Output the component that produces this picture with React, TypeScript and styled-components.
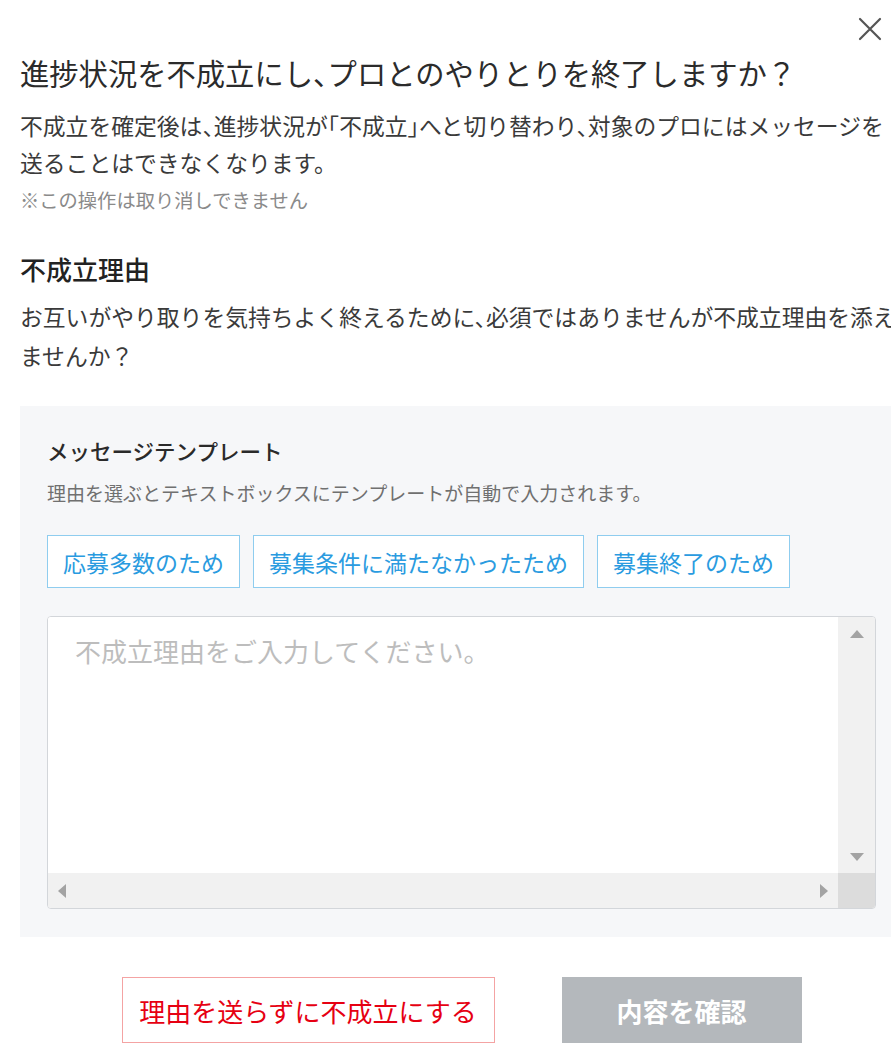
import React from 'react';
import styled, { createGlobalStyle } from 'styled-components';

const GlobalStyle = createGlobalStyle`
  html, body {
    margin: 0;
    padding: 0;
    background: #fff;
    overflow: hidden;
  }
  body {
    font-family: "Noto Sans CJK JP", "Noto Sans", sans-serif;
    color: #333;
  }
`;

const Modal = styled.div`
  position: relative;
  width: 883px;
  padding: 52px 20px 40px 20px;
  font-feature-settings: "halt";
`;

const CloseButton = styled.button`
  position: absolute;
  top: 16px;
  left: 857px;
  width: 26px;
  height: 26px;
  padding: 0;
  border: none;
  background: none;
  cursor: pointer;
  display: flex;
  align-items: center;
  justify-content: center;
`;

const Title = styled.h1`
  margin: 0;
  font-size: 29.3px;
  line-height: 40px;
  font-weight: 400;
  color: #2b2b2b;
  white-space: nowrap;
`;

const Lead = styled.p<{ $top: number; $lh: number }>`
  margin: ${(p) => p.$top}px 0 0;
  font-size: 22.8px;
  line-height: ${(p) => p.$lh}px;
  color: #3a3a3a;
`;

const Note = styled.p`
  margin: 6px 0 0;
  font-size: 19.3px;
  line-height: 26px;
  color: #8a8a8a;
`;

const SectionTitle = styled.h2`
  margin: 38px 0 0;
  font-size: 26px;
  line-height: 36px;
  font-weight: 500;
  color: #222;
`;

const Panel = styled.section`
  margin-top: 31px;
  background: #f6f7f9;
  padding: 30px 27px 28px;
`;

const PanelTitle = styled.h3`
  margin: 0;
  font-size: 21.5px;
  line-height: 30px;
  font-weight: 500;
  color: #2a2a2a;
`;

const PanelHint = styled.p`
  margin: 14px 0 0;
  font-size: 19px;
  line-height: 26px;
  color: #707070;
`;

const ChipRow = styled.div`
  display: flex;
  gap: 13px;
  margin-top: 29px;
`;

const Chip = styled.button`
  height: 53px;
  padding: 0 15px;
  background: #fff;
  border: 1px solid #8fcdef;
  border-radius: 0;
  font-family: inherit;
  font-feature-settings: inherit;
  font-size: 23px;
  color: #2a9be0;
  cursor: pointer;
`;

const InputBox = styled.div`
  margin-top: 28px;
  height: 291px;
  border: 1px solid #d3d6da;
  border-radius: 4px;
  background: #fff;
  overflow: hidden;
  display: grid;
  grid-template-columns: 1fr 37px;
  grid-template-rows: 1fr 35px;
`;

const Reason = styled.textarea`
  border: none;
  outline: none;
  resize: none;
  padding: 16px 27px;
  font-family: inherit;
  font-size: 26px;
  line-height: 36px;
  color: #333;
  background: #fff;
  &::placeholder {
    color: #bdbdbd;
  }
`;

const VTrack = styled.div`
  background: #f1f1f1;
  display: flex;
  flex-direction: column;
  justify-content: space-between;
  align-items: center;
  padding: 13px 0 12px;
`;

const HTrack = styled.div`
  background: #f1f1f1;
  display: flex;
  justify-content: space-between;
  align-items: center;
  padding: 0 10px 0 10px;
`;

const Corner = styled.div`
  background: #dcdcdc;
`;

const Actions = styled.div`
  display: flex;
  justify-content: center;
  gap: 67px;
  margin-top: 40px;
`;

const ActionButton = styled.button<{ $variant: 'danger' | 'muted' }>`
  height: 66px;
  padding: 0 15px;
  font-family: inherit;
  font-size: 26px;
  cursor: pointer;
  border: 1px solid ${(p) => (p.$variant === 'danger' ? '#f4a3a3' : '#b4b8bc')};
  background: ${(p) => (p.$variant === 'danger' ? '#fff' : '#b4b8bc')};
  color: ${(p) => (p.$variant === 'danger' ? '#e60012' : '#fff')};
  font-weight: ${(p) => (p.$variant === 'danger' ? 400 : 700)};
  min-width: ${(p) => (p.$variant === 'danger' ? 373 : 240)}px;
`;

const Arrow = ({ dir }: { dir: 'up' | 'down' | 'left' | 'right' }) => {
  const shapes = {
    up: '0,8 7,0 14,8',
    down: '0,0 14,0 7,8',
    left: '8,0 8,14 0,7',
    right: '0,0 8,7 0,14',
  };
  const vertical = dir === 'up' || dir === 'down';
  return (
    <svg width={vertical ? 14 : 8} height={vertical ? 8 : 14} viewBox={vertical ? '0 0 14 8' : '0 0 8 14'}>
      <polygon points={shapes[dir]} fill="#a3a3a3" />
    </svg>
  );
};

const templates = ['応募多数のため', '募集条件に満たなかったため', '募集終了のため'];

export default function App() {
  return (
    <>
      <GlobalStyle />
      <Modal>
        <CloseButton aria-label="閉じる">
          <svg width="24" height="24" viewBox="0 0 24 24">
            <path d="M2 2 L22 22 M22 2 L2 22" stroke="#555" strokeWidth="2.2" strokeLinecap="round" />
          </svg>
        </CloseButton>
        <Title>進捗状況を不成立にし、プロとのやりとりを終了しますか？</Title>
        <Lead $top={15} $lh={37}>
          不成立を確定後は、進捗状況が「不成立」へと切り替わり、対象のプロにはメッセージを送ることはできなくなります。
        </Lead>
        <Note>※この操作は取り消しできません</Note>
        <SectionTitle>不成立理由</SectionTitle>
        <Lead $top={10} $lh={39}>
          お互いがやり取りを気持ちよく終えるために、必須ではありませんが不成立理由を添えませんか？
        </Lead>
        <Panel>
          <PanelTitle>メッセージテンプレート</PanelTitle>
          <PanelHint>理由を選ぶとテキストボックスにテンプレートが自動で入力されます。</PanelHint>
          <ChipRow>
            {templates.map((t) => (
              <Chip key={t}>{t}</Chip>
            ))}
          </ChipRow>
          <InputBox>
            <Reason placeholder="不成立理由をご入力してください。" />
            <VTrack>
              <Arrow dir="up" />
              <Arrow dir="down" />
            </VTrack>
            <HTrack>
              <Arrow dir="left" />
              <Arrow dir="right" />
            </HTrack>
            <Corner />
          </InputBox>
        </Panel>
        <Actions>
          <ActionButton $variant="danger">理由を送らずに不成立にする</ActionButton>
          <ActionButton $variant="muted">内容を確認</ActionButton>
        </Actions>
      </Modal>
    </>
  );
}
